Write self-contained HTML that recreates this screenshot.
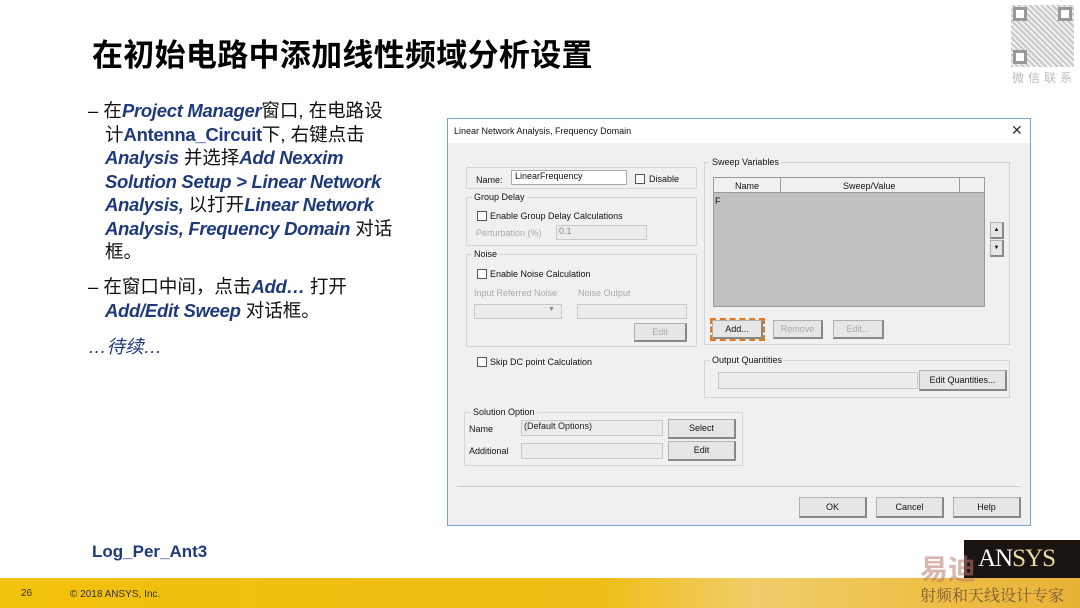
<!DOCTYPE html>
<html><head><meta charset="utf-8">
<style>
*{margin:0;padding:0;box-sizing:border-box}
body{width:1080px;height:608px;position:relative;background:#fff;overflow:hidden;font-family:"Liberation Sans","Noto Sans CJK SC",sans-serif}
.a{position:absolute}
.t{font-size:31px;font-weight:bold;color:#000;left:92px;top:30px;letter-spacing:0.3px;white-space:nowrap;font-family:"Noto Sans CJK SC",sans-serif}
.txt{font-size:18.5px;color:#111;font-family:"Liberation Sans","Noto Sans CJK SC",sans-serif;white-space:nowrap}
.txt i{color:#1f3a7a;font-weight:bold;letter-spacing:-0.3px}
.txt b{color:#1f3a7a;letter-spacing:-0.3px}
.ln{position:absolute;left:0;line-height:22px;height:22px}
.d{font-size:9px;color:#111;font-family:"Liberation Sans",sans-serif}
.box{position:absolute;border:1px solid #d5d5d5}
.lbl{position:absolute;background:#f0f0f0;padding:0 2px;font-size:9px}
.cb{position:absolute;width:10px;height:10px;border:1px solid #555;background:#fff}
.inp{position:absolute;border:1px solid #c8c8c8;background:#ececec}
.btn{position:absolute;background:#e6e6e6;border:1px solid #b0b0b0;border-right:2px solid #888;border-bottom:2px solid #888;text-align:center;font-size:9px}
.g{color:#aaa}
</style></head><body>
<div class="a t">在初始电路中添加线性频域分析设置</div>

<div class="a" style="left:1011px;top:5px;width:63px;height:62px;background:repeating-linear-gradient(45deg,#bbb 0 2px,#eee 2px 4px),#ddd;opacity:.8"></div>
<div class="a" style="left:1013px;top:7px;width:14px;height:14px;border:3px solid #999;background:#fff"></div>
<div class="a" style="left:1058px;top:7px;width:14px;height:14px;border:3px solid #999;background:#fff"></div>
<div class="a" style="left:1013px;top:50px;width:14px;height:14px;border:3px solid #999;background:#fff"></div>
<div class="a" style="left:1012px;top:69px;font-size:12px;color:#bbb;letter-spacing:4px;font-family:'Noto Sans CJK SC',sans-serif">微信联系</div>

<div class="a txt" style="left:88px;top:100px;width:330px;height:260px">
<div class="ln" style="top:0">– 在<i>Project Manager</i>窗口, 在电路设</div>
<div class="ln" style="top:23.5px;left:17px">计<b style="font-weight:bold">Antenna_Circuit</b>下, 右键点击</div>
<div class="ln" style="top:47px;left:17px"><i>Analysis</i> 并选择<i>Add Nexxim</i></div>
<div class="ln" style="top:70.5px;left:17px"><i>Solution Setup &gt; Linear Network</i></div>
<div class="ln" style="top:94px;left:17px"><i>Analysis,</i> 以打开<i>Linear Network</i></div>
<div class="ln" style="top:117.5px;left:17px"><i>Analysis, Frequency Domain</i> 对话</div>
<div class="ln" style="top:141px;left:17px">框。</div>
<div class="ln" style="top:176px">– 在窗口中间，点击<i>Add…</i> 打开</div>
<div class="ln" style="top:199.5px;left:17px"><i>Add/Edit Sweep</i> 对话框。</div>
<div class="ln" style="top:236px;color:#1f3a7a;font-style:italic">…待续…</div>
</div>

<div class="a" style="left:92px;top:542px;font-size:17px;font-weight:bold;color:#1f3a7a">Log_Per_Ant3</div>

<div class="a" style="left:447px;top:118px;width:584px;height:408px;border:1px solid #7aa3d0;background:#f0f0f0">
 <div class="a" style="left:0;top:0;width:582px;height:24px;background:#fff"></div>
 <div class="a d" style="left:6px;top:7px">Linear Network Analysis, Frequency Domain</div>
 <div class="a" style="left:563px;top:3px;font-size:14px;color:#333">✕</div>
</div>
<div class="a d" style="left:0;top:0;width:1080px;height:608px">
 <div class="box" style="left:466px;top:167px;width:231px;height:22px"></div>
 <div class="a" style="left:476px;top:175px">Name:</div>
 <div class="a" style="left:511px;top:170px;width:116px;height:15px;background:#fff;border:1px solid #aaa;padding-left:3px">LinearFrequency</div>
 <div class="cb" style="left:635px;top:174px"></div><div class="a" style="left:649px;top:174px">Disable</div>
 <div class="box" style="left:466px;top:197px;width:231px;height:49px"></div>
 <div class="lbl" style="left:472px;top:192px">Group Delay</div>
 <div class="cb" style="left:477px;top:211px"></div><div class="a" style="left:490px;top:211px">Enable Group Delay Calculations</div>
 <div class="a g" style="left:476px;top:228px">Perturbation (%)</div>
 <div class="inp" style="left:556px;top:225px;width:91px;height:15px;padding-left:2px;color:#888">0.1</div>
 <div class="box" style="left:466px;top:254px;width:231px;height:93px"></div>
 <div class="lbl" style="left:472px;top:249px">Noise</div>
 <div class="cb" style="left:477px;top:269px"></div><div class="a" style="left:490px;top:269px">Enable Noise Calculation</div>
 <div class="a g" style="left:474px;top:288px">Input Referred Noise</div>
 <div class="a g" style="left:578px;top:288px">Noise Output</div>
 <div class="inp" style="left:474px;top:304px;width:88px;height:15px"></div>
 <div class="a" style="left:548px;top:306px;color:#888;font-size:7px">▼</div>
 <div class="inp" style="left:577px;top:304px;width:110px;height:15px"></div>
 <div class="btn g" style="left:634px;top:323px;width:53px;height:19px;line-height:17px">Edit</div>
 <div class="cb" style="left:477px;top:357px"></div><div class="a" style="left:490px;top:357px">Skip DC point Calculation</div>
 <div class="box" style="left:704px;top:162px;width:306px;height:183px"></div>
 <div class="lbl" style="left:710px;top:157px">Sweep Variables</div>
 <div class="a" style="left:713px;top:177px;width:272px;height:130px;background:#c0c0c0;border:1px solid #999"></div>
 <div class="a" style="left:714px;top:178px;width:270px;height:15px;background:#f0f0f0;border-bottom:1px solid #999"></div>
 <div class="a" style="left:780px;top:178px;width:1px;height:15px;background:#999"></div>
 <div class="a" style="left:959px;top:178px;width:1px;height:15px;background:#999"></div>
 <div class="a" style="left:735px;top:181px">Name</div>
 <div class="a" style="left:843px;top:181px">Sweep/Value</div>
 <div class="a" style="left:715px;top:196px">F</div>
 <div class="btn" style="left:990px;top:222px;width:14px;height:17px;font-size:6px;line-height:15px">▲</div>
 <div class="btn" style="left:990px;top:240px;width:14px;height:17px;font-size:6px;line-height:15px">▼</div>
 <div class="btn" style="left:712px;top:320px;width:51px;height:19px;line-height:16px;outline:2px dashed #e07a1a;outline-offset:0">Add...</div>
 <div class="btn g" style="left:773px;top:320px;width:50px;height:19px;line-height:16px">Remove</div>
 <div class="btn g" style="left:833px;top:320px;width:51px;height:19px;line-height:16px">Edit...</div>
 <div class="box" style="left:704px;top:360px;width:306px;height:38px"></div>
 <div class="lbl" style="left:710px;top:355px">Output Quantities</div>
 <div class="inp" style="left:718px;top:372px;width:200px;height:17px"></div>
 <div class="btn" style="left:919px;top:370px;width:88px;height:21px;line-height:18px">Edit Quantities...</div>
 <div class="box" style="left:464px;top:412px;width:279px;height:54px"></div>
 <div class="lbl" style="left:471px;top:407px">Solution Option</div>
 <div class="a" style="left:469px;top:424px">Name</div>
 <div class="inp" style="left:521px;top:420px;width:142px;height:16px;padding-left:2px;color:#222">(Default Options)</div>
 <div class="btn" style="left:668px;top:419px;width:68px;height:20px;line-height:17px">Select</div>
 <div class="a" style="left:469px;top:446px">Additional</div>
 <div class="inp" style="left:521px;top:443px;width:142px;height:16px"></div>
 <div class="btn" style="left:668px;top:441px;width:68px;height:20px;line-height:17px">Edit</div>
 <div class="a" style="left:457px;top:486px;width:564px;height:1px;background:#ccc"></div>
 <div class="btn" style="left:799px;top:497px;width:68px;height:21px;line-height:18px">OK</div>
 <div class="btn" style="left:876px;top:497px;width:68px;height:21px;line-height:18px">Cancel</div>
 <div class="btn" style="left:953px;top:497px;width:68px;height:21px;line-height:18px">Help</div>
</div>

<div class="a" style="left:0;top:578px;width:1080px;height:30px;background:linear-gradient(90deg,#f2c10c 0%,#efbd14 55%,#f0cd6a 70%,#eec048 85%,#e8b236 100%)"></div>
<div class="a" style="left:21px;top:588px;font-size:10px;color:#333">26</div>
<div class="a" style="left:70px;top:589px;font-size:10px;color:#333">© 2018 ANSYS, Inc.</div>
<div class="a" style="left:964px;top:540px;width:116px;height:38px;background:#1a1410"></div>
<div class="a" style="left:978px;top:545px;font-size:25px;font-family:'Liberation Serif',serif;color:#fff;letter-spacing:-1px">AN<span style="color:#ead9a0">SYS</span></div>
<div class="a" style="left:920px;top:548px;font-size:28px;font-weight:bold;color:rgba(190,120,110,.55);font-family:'Noto Sans CJK SC',sans-serif">易迪</div>
<div class="a" style="left:920px;top:583px;font-size:16px;color:#7a5a3a;font-family:'Noto Serif CJK SC',serif;white-space:nowrap">射频和天线设计专家</div>
</body></html>
